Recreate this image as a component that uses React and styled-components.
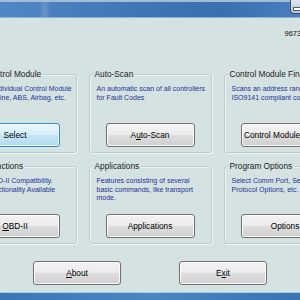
import styled, { createGlobalStyle } from "styled-components";

const GlobalStyle = createGlobalStyle`
  html, body {
    margin: 0;
    padding: 0;
    overflow: hidden;
    background: #d5e2e2;
  }
`;

const Window = styled.div`
  width: 300px;
  height: 300px;
  display: flex;
  flex-direction: column;
  overflow: hidden;
  background: #d5e2e2;
  font-family: "Liberation Sans", Arial, sans-serif;
`;

const TitleBar = styled.div`
  height: 18px;
  flex-shrink: 0;
  display: flex;
  justify-content: flex-end;
  box-sizing: border-box;
  border-top: 2px solid #a3bcd8;
  border-bottom: 1px solid #8eb0d4;
  background: linear-gradient(
    90deg,
    #4f86c4 0%,
    #4c83c2 13%,
    #6894c9 15%,
    #4a80c0 17%,
    #3f75b7 50%,
    #3a6fb2 75%,
    #4a80bf 100%
  );
`;

const WinButton = styled.div`
  width: 14px;
  height: 14px;
  margin-top: -2px;
  margin-right: -4px;
  box-sizing: border-box;
  border: 1px solid #3d4f66;
  border-top: none;
  border-radius: 0 0 0 4px;
  background: linear-gradient(#dfe6ee, #b8c5d4);
  display: flex;
  align-items: flex-end;
  justify-content: center;
  padding-bottom: 3px;

  &::after {
    content: "";
    width: 7px;
    height: 2px;
    background: #fff;
    box-shadow: 0 0 0 1px #4a5a70;
  }
`;

const Body = styled.div`
  flex: 1;
  display: flex;
  flex-direction: column;
  align-items: center;
  padding-top: 11px;
`;

const Content = styled.div`
  width: 393px;
  flex-shrink: 0;
  display: flex;
  flex-direction: column;
`;

const Serial = styled.div`
  height: 10px;
  line-height: 10px;
  font-size: 7.5px;
  color: #111;
  padding-left: 331px;
  white-space: nowrap;
`;

const Grid = styled.div`
  display: grid;
  grid-template-columns: repeat(3, 123px);
  grid-template-rows: 79px 78px;
  column-gap: 12px;
  row-gap: 13px;
  margin-top: 35px;
`;

const Group = styled.div`
  display: flex;
  flex-direction: column;
  box-sizing: border-box;
  border: 1px solid #bccbce;
  border-radius: 3px;
  box-shadow: inset 1px 1px 0 #eef4f4, 1px 1px 0 #eef4f4;
  padding: 0 7px 5px;
`;

const Legend = styled.div`
  align-self: flex-start;
  margin: -6px 0 0 -4px;
  padding: 0 2px;
  background: #d5e2e2;
  font-size: 8.3px;
  line-height: 11px;
  color: #1c1c1c;
  white-space: nowrap;
`;

const Desc = styled.div`
  margin-top: 5px;
  font-size: 7px;
  line-height: 8.6px;
  color: #22339a;
  white-space: nowrap;
`;

const Button = styled.button`
  align-self: center;
  margin-top: ${(p) => (p.$inGroup ? "auto" : "0")};
  width: 89px;
  height: 24px;
  flex-shrink: 0;
  box-sizing: border-box;
  padding: 0;
  font-family: inherit;
  font-size: 8.3px;
  color: #000;
  white-space: nowrap;
  border-radius: 3px;
  border: 1px solid ${(p) => (p.$focused ? "#3c8cc0" : "#707070")};
  box-shadow: inset 0 0 0 1px ${(p) => (p.$focused ? "#e8f6fd" : "#fbfbfb")};
  background: ${(p) =>
    p.$focused
      ? "linear-gradient(#e6f5fc 0%, #d8eff9 50%, #c3e5f5 52%, #b2dbef 100%)"
      : "linear-gradient(#f3f3f3 0%, #ebebeb 50%, #dddddd 52%, #d0d0d0 100%)"};
`;

const Key = styled.span`
  text-decoration: underline;
`;

const BottomRow = styled.div`
  display: flex;
  justify-content: center;
  gap: 58px;
  margin-top: 17px;

  & > button {
    width: 88px;
  }
`;

const Footer = styled.div`
  margin-top: auto;
  height: 7px;
  flex-shrink: 0;
  border-top: 1px solid #a9c8e2;
  background: linear-gradient(90deg, #3b77b6, #4a86c2 50%, #3a74b4);
`;

const groups = [
  {
    title: "Select Control Module",
    desc: ["Select an Individual Control Module", "such as Engine, ABS, Airbag, etc."],
    button: "Select",
    focused: true,
  },
  {
    title: "Auto-Scan",
    desc: ["An automatic scan of all controllers", "for Fault Codes"],
    button: (
      <>
        A<Key>u</Key>to-Scan
      </>
    ),
  },
  {
    title: "Control Module Finder",
    desc: ["Scans an address range for", "ISO9141 compliant controllers"],
    button: "Control Module Finder",
  },
  {
    title: "OBD-II Functions",
    desc: ["Generic OBD-II Compatibility.", "Limited Functionality Available"],
    button: (
      <>
        <Key>O</Key>BD-II
      </>
    ),
  },
  {
    title: "Applications",
    desc: ["Features consisting of several", "basic commands, like transport", "mode."],
    button: "Applications",
  },
  {
    title: "Program Options",
    desc: ["Select Comm Port, Set", "Protocol Options, etc."],
    button: "Options",
  },
];

export default function App() {
  return (
    <>
      <GlobalStyle />
      <Window>
        <TitleBar>
          <WinButton />
        </TitleBar>
        <Body>
          <Content>
            <Serial>967301-VCDS</Serial>
            <Grid>
              {groups.map((g) => (
                <Group key={g.title}>
                  <Legend>{g.title}</Legend>
                  <Desc>
                    {g.desc.map((line) => (
                      <div key={line}>{line}</div>
                    ))}
                  </Desc>
                  <Button $inGroup $focused={g.focused}>
                    {g.button}
                  </Button>
                </Group>
              ))}
            </Grid>
            <BottomRow>
              <Button>
                <Key>A</Key>bout
              </Button>
              <Button>
                E<Key>x</Key>it
              </Button>
            </BottomRow>
          </Content>
        </Body>
        <Footer />
      </Window>
    </>
  );
}
